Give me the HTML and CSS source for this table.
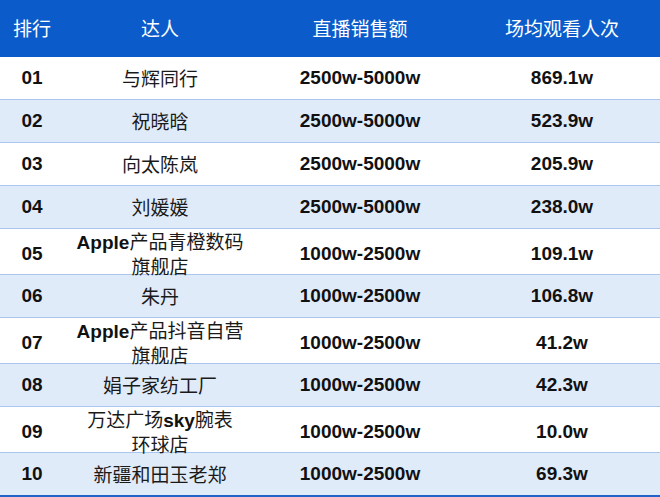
FILE: index.html
```html
<!DOCTYPE html>
<html lang="zh">
<head>
<meta charset="utf-8">
<title>达人排行</title>
<link rel="stylesheet" href="styles.css">
</head>
<body>
<div class="table">
  <div class="row head">
    <div class="cell">排行</div>
    <div class="cell">达人</div>
    <div class="cell">直播销售额</div>
    <div class="cell">场均观看人次</div>
  </div>
  <div class="row">
    <div class="cell num">01</div>
    <div class="cell name"><span>与辉同行</span></div>
    <div class="cell num">2500w-5000w</div>
    <div class="cell num">869.1w</div>
  </div>
  <div class="row alt">
    <div class="cell num">02</div>
    <div class="cell name"><span>祝晓晗</span></div>
    <div class="cell num">2500w-5000w</div>
    <div class="cell num">523.9w</div>
  </div>
  <div class="row">
    <div class="cell num">03</div>
    <div class="cell name"><span>向太陈岚</span></div>
    <div class="cell num">2500w-5000w</div>
    <div class="cell num">205.9w</div>
  </div>
  <div class="row alt">
    <div class="cell num">04</div>
    <div class="cell name"><span>刘媛媛</span></div>
    <div class="cell num">2500w-5000w</div>
    <div class="cell num">238.0w</div>
  </div>
  <div class="row tall">
    <div class="cell num">05</div>
    <div class="cell name"><span><b>Apple</b>产品青橙数码<br>旗舰店</span></div>
    <div class="cell num">1000w-2500w</div>
    <div class="cell num">109.1w</div>
  </div>
  <div class="row alt">
    <div class="cell num">06</div>
    <div class="cell name"><span>朱丹</span></div>
    <div class="cell num">1000w-2500w</div>
    <div class="cell num">106.8w</div>
  </div>
  <div class="row tall">
    <div class="cell num">07</div>
    <div class="cell name"><span><b>Apple</b>产品抖音自营<br>旗舰店</span></div>
    <div class="cell num">1000w-2500w</div>
    <div class="cell num">41.2w</div>
  </div>
  <div class="row alt">
    <div class="cell num">08</div>
    <div class="cell name"><span>娟子家纺工厂</span></div>
    <div class="cell num">1000w-2500w</div>
    <div class="cell num">42.3w</div>
  </div>
  <div class="row tall">
    <div class="cell num">09</div>
    <div class="cell name"><span>万达广场<b>sky</b>腕表<br>环球店</span></div>
    <div class="cell num">1000w-2500w</div>
    <div class="cell num">10.0w</div>
  </div>
  <div class="row alt last">
    <div class="cell num">10</div>
    <div class="cell name"><span>新疆和田玉老郑</span></div>
    <div class="cell num">1000w-2500w</div>
    <div class="cell num">69.3w</div>
  </div>
</div>
</body>
</html>
```

FILE: styles.css
```css
html, body {
  margin: 0;
  padding: 0;
  background: #ffffff;
}

.table {
  width: 660px;
  font-family: "Liberation Sans", "Noto Sans CJK SC", sans-serif;
  color: #111111;
}

.row {
  display: grid;
  grid-template-columns: 64px 192px 208px 196px;
  height: 43px;
  box-sizing: border-box;
  border-bottom: 1px solid #aac6ee;
  background: #ffffff;
}

.row.alt {
  background: #e0ebfa;
}

.row.tall {
  height: 46px;
}

.row.last {
  height: 44px;
  border-bottom: 2px solid #2163c9;
}

.row.head {
  height: 57px;
  background: #0b5cca;
  color: #ffffff;
  border-bottom: none;
}

.cell {
  display: flex;
  align-items: center;
  justify-content: center;
  text-align: center;
  font-size: 19px;
}

.head .cell {
  font-family: "Noto Sans CJK SC", sans-serif;
  font-size: 19px;
  font-weight: 400;
  padding-bottom: 2px;
}

.num {
  font-weight: 700;
  font-size: 19px;
}

.name {
  font-family: "Noto Sans CJK SC", sans-serif;
  font-weight: 400;
  color: #1a1a1a;
}

.name span {
  display: block;
  line-height: 23px;
  padding-bottom: 2px;
}

.name b {
  font-family: "Liberation Sans", sans-serif;
  font-weight: 700;
  color: #111111;
}
```
